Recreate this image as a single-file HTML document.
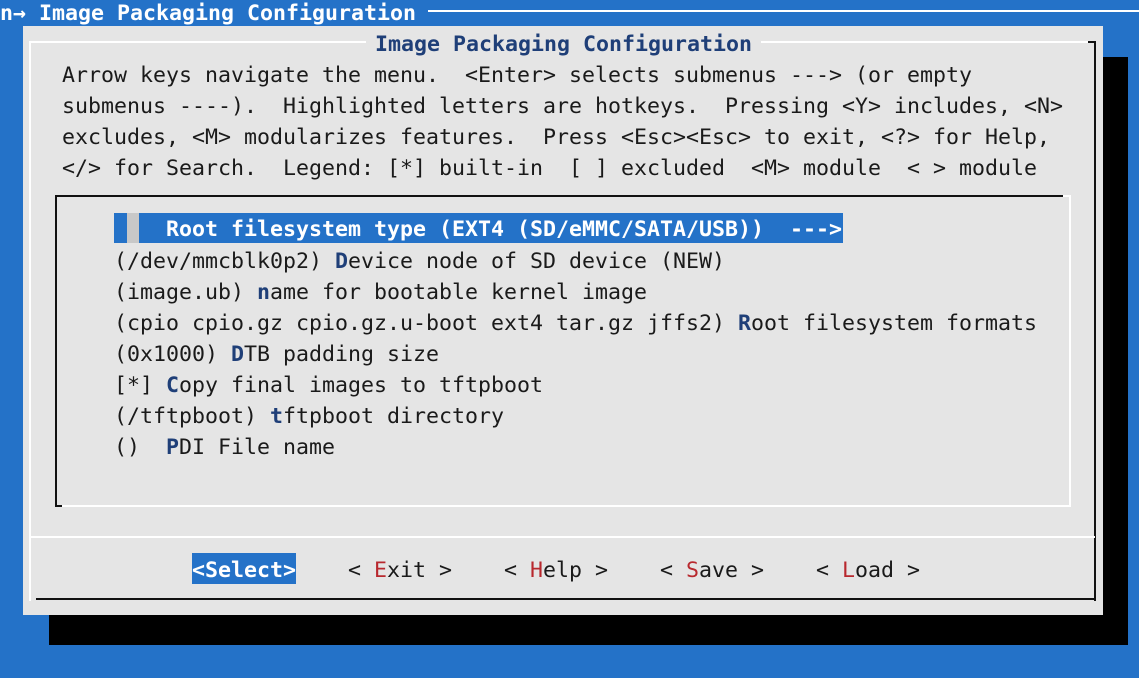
<!DOCTYPE html>
<html><head><meta charset="utf-8"><style>
body{margin:0;width:1139px;height:678px;background:#2472c8;position:relative;overflow:hidden;font-family:"DejaVu Sans Mono","Liberation Mono",monospace;font-size:21.6px;}
div{position:absolute;}
.t{white-space:pre;line-height:31px;height:31px;color:#1a1a1a;}
.h{color:#1f3f78;font-weight:bold;}
.r{color:#b8282e;}
.w{background:#fff;}
.k{background:#111;}
</style></head><body>
<div class="t" style="left:0;top:-2px;color:#fff;font-weight:bold;">n→ Image Packaging Configuration</div>
<div style="left:428px;top:10px;width:711px;height:2px;background:#fff;"></div>
<div style="left:49px;top:57px;width:1079px;height:588px;background:#000;"></div>
<div style="left:23px;top:26px;width:1080px;height:589px;background:#e5e5e5;"></div>
<div class="w" style="left:29px;top:41px;width:1063px;height:2px;"></div>
<div class="w" style="left:29px;top:41px;width:2px;height:560px;"></div>
<div class="k" style="left:1094px;top:41px;width:2px;height:560px;"></div>
<div class="k" style="left:1088px;top:41px;width:8px;height:2px;"></div>
<div class="k" style="left:36px;top:598px;width:1060px;height:2px;"></div>
<div class="w" style="left:29px;top:536px;width:1066px;height:2px;"></div>
<div class="t h" style="left:366px;top:29px;background:#e5e5e5;padding:0 9px;">Image Packaging Configuration</div>
<div class="t" style="left:62px;top:60px;">Arrow keys navigate the menu.  &lt;Enter&gt; selects submenus ---&gt; (or empty</div>
<div class="t" style="left:62px;top:91px;">submenus ----).  Highlighted letters are hotkeys.  Pressing &lt;Y&gt; includes, &lt;N&gt;</div>
<div class="t" style="left:62px;top:122px;">excludes, &lt;M&gt; modularizes features.  Press &lt;Esc&gt;&lt;Esc&gt; to exit, &lt;?&gt; for Help,</div>
<div class="t" style="left:62px;top:153px;">&lt;/&gt; for Search.  Legend: [*] built-in  [ ] excluded  &lt;M&gt; module  &lt; &gt; module</div>
<div class="k" style="left:55px;top:195px;width:1010px;height:2px;"></div>
<div class="k" style="left:55px;top:195px;width:2px;height:312px;"></div>
<div class="w" style="left:1069px;top:195px;width:2px;height:312px;"></div>
<div class="w" style="left:1063px;top:195px;width:8px;height:2px;"></div>
<div class="w" style="left:62px;top:505px;width:1009px;height:2px;"></div>
<div class="k" style="left:55px;top:505px;width:7px;height:2px;"></div>
<div style="left:114px;top:213px;width:729px;height:30px;background:#2472c8;"></div>
<div style="left:127px;top:213px;width:12px;height:30px;background:#c8c8c8;"></div>
<div class="t" style="left:114px;top:214px;color:#fff;font-weight:bold;">    Root filesystem type (EXT4 (SD/eMMC/SATA/USB))  ---&gt;</div>
<div class="t" style="left:114px;top:246px;">(/dev/mmcblk0p2) <span class="h">D</span>evice node of SD device (NEW)</div>
<div class="t" style="left:114px;top:277px;">(image.ub) <span class="h">n</span>ame for bootable kernel image</div>
<div class="t" style="left:114px;top:308px;">(cpio cpio.gz cpio.gz.u-boot ext4 tar.gz jffs2) <span class="h">R</span>oot filesystem formats</div>
<div class="t" style="left:114px;top:339px;">(0x1000) <span class="h">D</span>TB padding size</div>
<div class="t" style="left:114px;top:370px;">[*] <span class="h">C</span>opy final images to tftpboot</div>
<div class="t" style="left:114px;top:401px;">(/tftpboot) <span class="h">t</span>ftpboot directory</div>
<div class="t" style="left:114px;top:432px;">()  <span class="h">P</span>DI File name</div>
<div style="left:192px;top:553px;width:104px;height:31px;background:#2472c8;"></div>
<div class="t" style="left:192px;top:555px;width:104px;color:#fff;font-weight:bold;">&lt;Select&gt;</div>
<div class="t" style="left:348px;top:555px;">&lt; <span class="r">E</span>xit &gt;</div>
<div class="t" style="left:504px;top:555px;">&lt; <span class="r">H</span>elp &gt;</div>
<div class="t" style="left:660px;top:555px;">&lt; <span class="r">S</span>ave &gt;</div>
<div class="t" style="left:816px;top:555px;">&lt; <span class="r">L</span>oad &gt;</div>
</body></html>
